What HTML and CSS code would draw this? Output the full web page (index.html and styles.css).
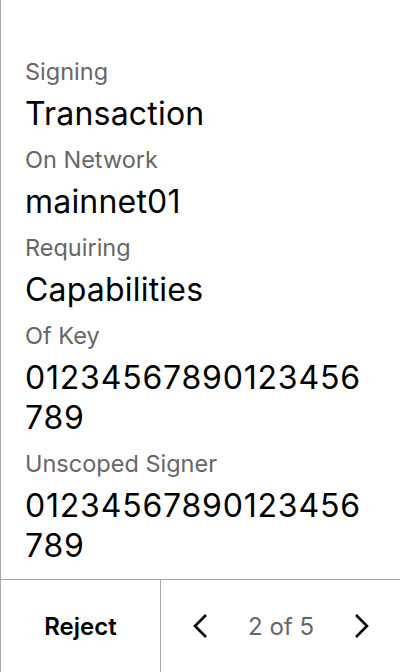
FILE: index.html
```html
<!DOCTYPE html>
<html>
<head>
<meta charset="utf-8">
<link rel="stylesheet" href="styles.css">
</head>
<body>
<div class="screen">
  <main class="content">
    <div class="field">
      <div class="label">Signing</div>
      <div class="value">Transaction</div>
    </div>
    <div class="field">
      <div class="label">On Network</div>
      <div class="value">mainnet01</div>
    </div>
    <div class="field">
      <div class="label">Requiring</div>
      <div class="value">Capabilities</div>
    </div>
    <div class="field">
      <div class="label">Of Key</div>
      <div class="value digits">01234567890123456789</div>
    </div>
    <div class="field">
      <div class="label">Unscoped Signer</div>
      <div class="value digits">01234567890123456789</div>
    </div>
  </main>
  <footer class="footer">
    <div class="reject">Reject</div>
    <div class="pager">
      <svg class="chev" width="16" height="26" viewBox="0 0 16 26"><path d="M14 2 L3 13 L14 24" fill="none" stroke="#000" stroke-width="2.6"/></svg>
      <span class="count">2 of 5</span>
      <svg class="chev" width="16" height="26" viewBox="0 0 16 26"><path d="M2 2 L13 13 L2 24" fill="none" stroke="#000" stroke-width="2.6"/></svg>
    </div>
  </footer>
</div>
</body>
</html>
```
FILE: styles.css
```css
* { box-sizing: border-box; }
html, body { margin: 0; padding: 0; background: #fff; }
body { font-family: Inter, "Noto Sans", sans-serif; color: #000; }
.screen {
  width: 400px;
  height: 672px;
  border-left: 1px solid #a8a8a8;
  display: flex;
  flex-direction: column;
}
.content {
  flex: 1;
  padding: 58px 30px 0 24px;
  display: flex;
  flex-direction: column;
  gap: 12px;
}
.field { display: flex; flex-direction: column; gap: 8px; }
.label { font-size: 23.5px; line-height: 28px; color: #666; }
.value { font-size: 32px; line-height: 40px; color: #000; word-break: break-all; letter-spacing: 0.2px; }
.digits { letter-spacing: 0.8px; }
.footer {
  height: 93px;
  border-top: 1px solid #a8a8a8;
  display: flex;
}
.reject {
  width: 160px;
  border-right: 1px solid #a8a8a8;
  display: flex;
  align-items: center;
  justify-content: center;
  font-size: 24px;
  font-weight: 600;
}
.pager {
  flex: 1;
  display: flex;
  align-items: center;
  justify-content: space-between;
  padding: 0 30px 0 31px;
}
.count { font-size: 24px; color: #666; }
```
